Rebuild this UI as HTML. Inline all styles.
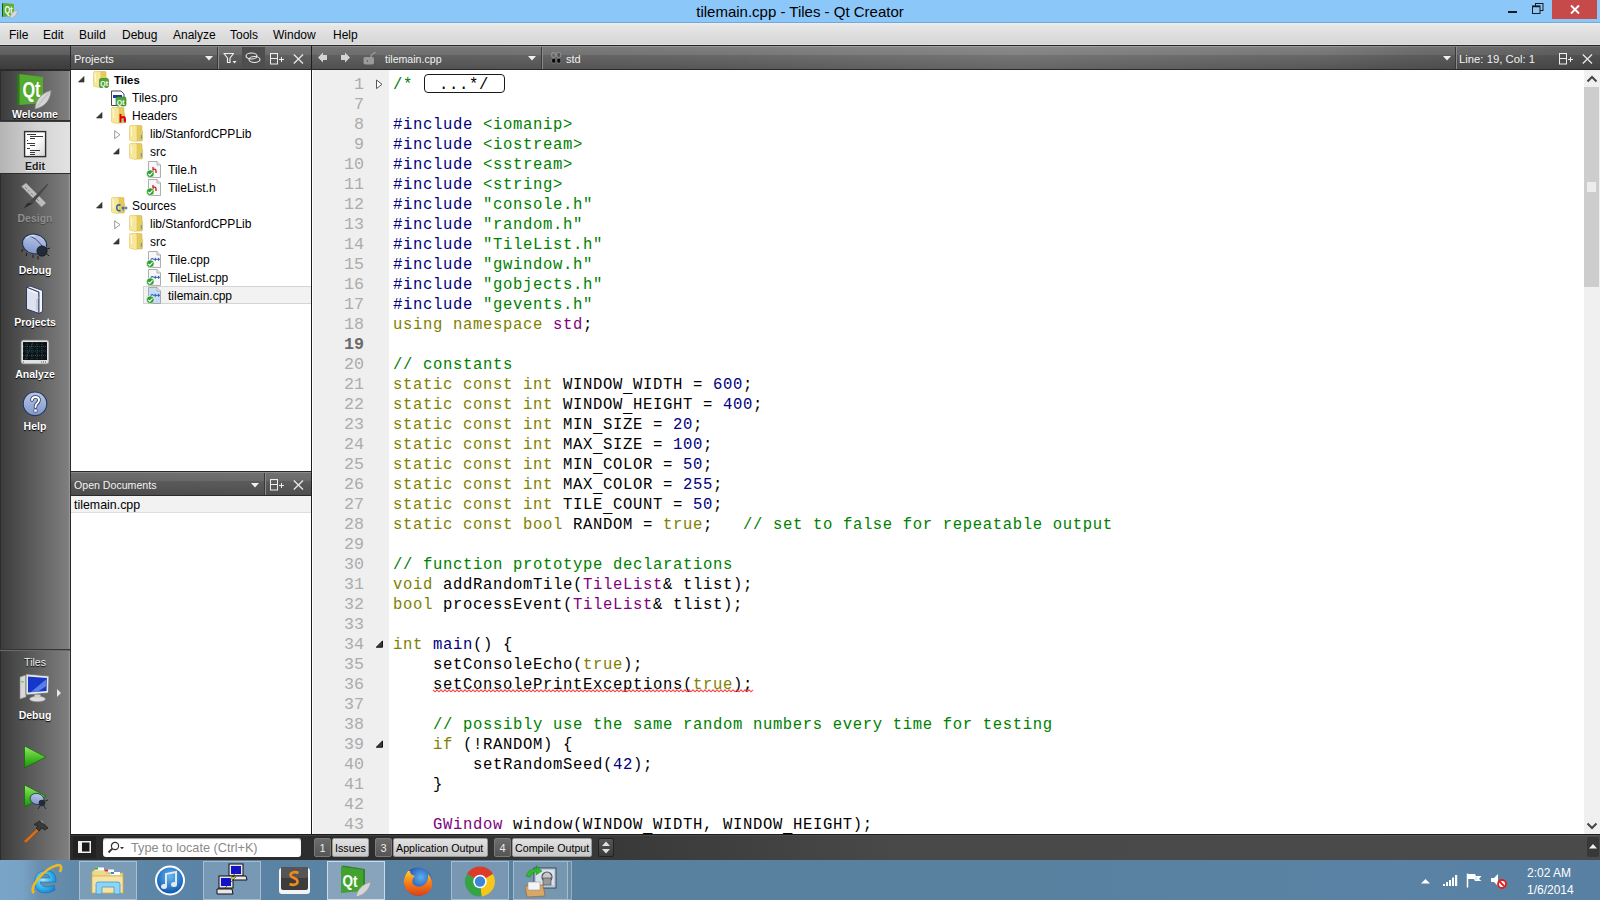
<!DOCTYPE html>
<html><head><meta charset="utf-8">
<style>
*{margin:0;padding:0;box-sizing:border-box}
html,body{width:1600px;height:900px;overflow:hidden;background:#fff;font-family:"Liberation Sans",sans-serif}
.a{position:absolute}
svg{position:absolute;overflow:visible}
#title{left:0;top:0;width:1600px;height:23px;background:#8cc7f9;border-bottom:1px solid #70a9da}
#ttext{left:0;top:3px;width:1600px;text-align:center;font-size:15px;color:#000}
#menu{left:0;top:23px;width:1600px;height:22px;background:linear-gradient(#f0eeec 0,#e6e6e6 3px,#d6d6d6 21px,#e0e0e0 21px)}
.mi{top:28px;font-size:12px;color:#000}
#tbline{left:0;top:45px;width:1600px;height:1px;background:#262626}
.hdr{height:24px;background:linear-gradient(#9a9a9a 0,#9a9a9a 1px,#7e7e7e 1px,#767676 9px,#686868 9px,#575757 23px);border-bottom:1px solid #2a2a2a}
.htxt{font-size:11px;color:#f2f2f2;white-space:nowrap}
#side{left:0;top:46px;width:70px;height:814px;background:linear-gradient(90deg,#3c3c3c,#575757 40%,#7e7e7e 97%,#909090)}
.mlab{position:absolute;left:0;width:70px;text-align:center;font-size:10.5px;font-weight:bold;color:#fff;text-shadow:0 1px 1px #000}
#tree{left:71px;top:70px;width:240px;height:401px;background:#fff}
.tr{position:absolute;font-size:12px;color:#000;white-space:nowrap}
#odhdr{left:71px;top:471px;width:240px;height:25px;border-top:1px solid #2a2a2a}
#od{left:71px;top:496px;width:240px;height:338px;background:#fff}
#vdiv{left:311px;top:46px;width:1px;height:789px;background:#1e1e1e}
#gutter{left:313px;top:70px;width:76px;height:764px;background:#efefef}
#code{left:389px;top:70px;width:1196px;height:764px;background:#fff}
.ln{position:absolute;left:312px;width:52px;text-align:right;font-family:"Liberation Mono",monospace;font-size:16.67px;color:#acacac;line-height:20px}
.cl{position:absolute;left:393px;font-family:"Liberation Mono",monospace;font-size:15.6px;letter-spacing:0.6386px;line-height:20px;white-space:pre;color:#000}
.k{color:#808000}.p{color:#000080}.s{color:#008000}.c{color:#008000}.n{color:#000080}.t{color:#800080}.f{color:#000080}
.sq{}
#vscroll{left:1584px;top:70px;width:16px;height:764px;background:#f0f0f0}
#bottom{left:71px;top:834px;width:1529px;height:26px;background:linear-gradient(90deg,#2b2b2b 0,#2d2d2d 300px,#3a3a3a 560px,#494949 830px,#4a4a4a 100%);border-top:1px solid #1c1c1c}
#taskbar{left:0;top:860px;width:1600px;height:40px;background:linear-gradient(90deg,#7aa5c8 0,#78a2c4 22px,#6a8fae 40px,#6088a8 80px,#5b83a5 200px,#58809f 600px,#58809f 1000px,#5a82a4 1400px,#5880a2 1600px)}
.tb{position:absolute;top:861px;height:39px;width:58px;border:1px solid rgba(255,255,255,.35);background:rgba(255,255,255,.18)}
.obx{position:absolute;top:838px;height:19px;font-size:11px;white-space:nowrap}
.obn{position:absolute;top:838px;height:19px;width:17px;background:linear-gradient(#6c6c6c,#555);border:1px solid #7a7a7a;color:#eaeaea;font-size:11px;text-align:center;line-height:18px;border-radius:2px}
.obl{position:absolute;white-space:nowrap;overflow:hidden;top:838px;height:19px;background:linear-gradient(#e2e2e2,#c8c8c8);border:1px solid #9a9a9a;color:#000;font-size:10.7px;line-height:18px;padding-left:2px;border-radius:2px}
.u{position:relative;top:3px}
</style></head><body>
<div class="a" id="title"></div>
<svg style="left:0;top:0" width="20" height="20" viewBox="0 0 20 20"><path d="M2 3.6 L3.2 3 L3.2 17 L2 16.6Z" fill="#115e12"/><path d="M3.2 3 L13.9 4.1 L13.9 15.6 L3.2 17Z" fill="#5aae2e"/><text x="4.6" y="13.8" font-family="Liberation Sans" font-weight="bold" font-size="11" fill="#fff" textLength="8.2" lengthAdjust="spacingAndGlyphs">Qt</text><path d="M10 18.6 C10.2 14.2 13 11.2 17.5 10 C17.2 14.2 14.6 17.6 10 18.6Z" fill="#dadada" stroke="#9a9a9a" stroke-width=".5"/></svg>
<div class="a" id="ttext">tilemain.cpp - Tiles - Qt Creator</div>
<div class="a" style="left:1508px;top:11px;width:9px;height:2px;background:#1a1a1a"></div>
<svg style="left:1532px;top:3px" width="12" height="11" viewBox="0 0 12 11"><rect x="3.5" y="0.5" width="7.5" height="7" fill="none" stroke="#1a1a1a"/><rect x="0.5" y="3" width="7.5" height="7.5" fill="#8cc7f9" stroke="#1a1a1a"/><line x1="0.5" y1="3.5" x2="8" y2="3.5" stroke="#1a1a1a" stroke-width="1.5"/></svg>
<div class="a" style="left:1552px;top:0;width:45px;height:19px;background:#c74a4a"></div>
<svg style="left:1570px;top:5px" width="10" height="9" viewBox="0 0 10 9"><path d="M1 0.5 L9 8.5 M9 0.5 L1 8.5" stroke="#fff" stroke-width="1.8"/></svg>
<div class="a" id="menu"></div>
<div class="a mi" style="left:9px">File</div>
<div class="a mi" style="left:43px">Edit</div>
<div class="a mi" style="left:79px">Build</div>
<div class="a mi" style="left:122px">Debug</div>
<div class="a mi" style="left:173px">Analyze</div>
<div class="a mi" style="left:230px">Tools</div>
<div class="a mi" style="left:273px">Window</div>
<div class="a mi" style="left:333px">Help</div>
<div class="a" id="tbline"></div>
<div class="a" id="side"></div><div class="a" style="left:0;top:70px;width:1px;height:790px;background:#2c2c2c"></div><div class="a" style="left:69px;top:70px;width:1px;height:790px;background:#959595"></div>
<div class="a hdr" style="left:0;top:46px;width:70px;background:linear-gradient(#747474 0,#747474 1px,#686868 1px,#5e5e5e 9px,#4c4c4c 9px,#3c3c3c 23px)"></div><div class="a" style="left:70px;top:46px;width:1px;height:814px;background:#2a2a2a"></div>
<div class="a hdr" style="left:71px;top:46px;width:240px"></div>
<div class="a hdr" style="left:312px;top:46px;width:1288px"></div>
<div class="a" style="left:71px;top:46px;width:1529px;height:23px;background:linear-gradient(90deg,rgba(0,0,0,.13) 0,rgba(0,0,0,.06) 394px,rgba(0,0,0,0) 644px,rgba(255,255,255,.09) 944px,rgba(0,0,0,0) 1244px,rgba(0,0,0,.1) 1339px,rgba(0,0,0,.22) 1499px,rgba(0,0,0,.24) 1529px)"></div>
<div class="a" style="left:0;top:70px;width:70px;height:1px;background:#2a2a2a"></div>
<div class="a htxt" style="left:74px;top:53px">Projects</div>
<svg style="left:205px;top:56px" width="9" height="5" viewBox="0 0 9 5"><path d="M0 0 L8 0 L4 4.5 Z" fill="#f0f0f0"/></svg>
<div class="a" style="left:217px;top:47px;width:1px;height:22px;background:#3a3a3a"></div>
<div class="a" style="left:218px;top:47px;width:1px;height:22px;background:#8a8a8a"></div>
<svg style="left:223px;top:52px" width="16" height="13" viewBox="0 0 16 13"><path d="M1 1.5 L10.5 1.5 L7 6 L7 10.5 L4.5 10.5 L4.5 6 Z" fill="none" stroke="#eee" stroke-width="1.2" stroke-linejoin="round"/><path d="M9.5 9 L13.5 9 L11.5 11.5Z" fill="#eee"/></svg>
<div class="a" style="left:242px;top:47px;width:23px;height:22px;background:#4e4e4e"></div>
<svg style="left:245px;top:52px" width="17" height="12" viewBox="0 0 17 12"><ellipse cx="6.5" cy="4" rx="5.5" ry="3" fill="none" stroke="#eee" stroke-width="1.1"/><ellipse cx="9.5" cy="7.5" rx="5.5" ry="3" fill="none" stroke="#eee" stroke-width="1.1"/></svg>
<svg style="left:270px;top:53px" width="15" height="12" viewBox="0 0 15 12"><rect x="0.5" y="0.5" width="7" height="10.5" fill="none" stroke="#eee"/><line x1="0.5" y1="5.5" x2="7.5" y2="5.5" stroke="#eee"/><path d="M9 6.5 H14 M11.5 4 V9" stroke="#eee" stroke-width="1"/></svg>
<svg style="left:293px;top:54px" width="11" height="10" viewBox="0 0 11 10"><path d="M0.8 0.5 L10 9.5 M10 0.5 L0.8 9.5" stroke="#e8e8e8" stroke-width="1.3"/></svg>
<svg style="left:318px;top:52px" width="10" height="11" viewBox="0 0 10 11"><path d="M0 5.5 L5 0.5 L5 3 L9 3 L9 8 L5 8 L5 10.5 Z" fill="#d4d4d4"/></svg>
<svg style="left:341px;top:52px" width="10" height="11" viewBox="0 0 10 11"><path d="M9 5.5 L4 0.5 L4 3 L0 3 L0 8 L4 8 L4 10.5 Z" fill="#d4d4d4"/></svg>
<svg style="left:363px;top:51px" width="14" height="14" viewBox="0 0 14 14"><rect x="0.5" y="6" width="10.5" height="7.5" rx="1.8" fill="#9a9a9a"/><path d="M8 6 L8 4.5 L12.5 1" stroke="#9a9a9a" stroke-width="1.3" fill="none"/><path d="M5 9 L4 10 L5 11" stroke="#555" stroke-width=".8" fill="none"/></svg>
<div class="a htxt" style="left:385px;top:53px;font-size:10.6px">tilemain.cpp</div>
<svg style="left:528px;top:56px" width="9" height="5" viewBox="0 0 9 5"><path d="M0 0 L8 0 L4 4.5 Z" fill="#f0f0f0"/></svg>
<div class="a" style="left:541px;top:47px;width:1px;height:22px;background:#3a3a3a"></div>
<div class="a" style="left:542px;top:47px;width:1px;height:22px;background:#8a8a8a"></div>
<svg style="left:551px;top:52px" width="11" height="12" viewBox="0 0 11 12"><rect x="0.7" y="0.7" width="4" height="4.6" rx="1.3" fill="none" stroke="#9a9a9a" stroke-width=".9"/><rect x="5.8" y="0.7" width="4" height="4.6" rx="1.3" fill="#555" stroke="#9a9a9a" stroke-width=".9"/><rect x="0.7" y="6.3" width="4" height="4.8" rx="1.5" fill="#0a0a0a" stroke="#8a8a8a" stroke-width=".7"/><rect x="5.8" y="6.3" width="4" height="4.8" rx="1.5" fill="#0a0a0a" stroke="#8a8a8a" stroke-width=".7"/></svg>
<div class="a htxt" style="left:566px;top:53px">std</div>
<svg style="left:1443px;top:56px" width="9" height="5" viewBox="0 0 9 5"><path d="M0 0 L8 0 L4 4.5 Z" fill="#f0f0f0"/></svg>
<div class="a" style="left:1455px;top:47px;width:1px;height:22px;background:#3a3a3a"></div>
<div class="a" style="left:1456px;top:47px;width:1px;height:22px;background:#8a8a8a"></div>
<div class="a htxt" style="left:1459px;top:53px;font-size:11.3px">Line: 19, Col: 1</div>
<svg style="left:1559px;top:53px" width="15" height="12" viewBox="0 0 15 12"><rect x="0.5" y="0.5" width="7" height="10.5" fill="none" stroke="#eee"/><line x1="0.5" y1="5.5" x2="7.5" y2="5.5" stroke="#eee"/><path d="M9 6.5 H14 M11.5 4 V9" stroke="#eee" stroke-width="1"/></svg>
<svg style="left:1582px;top:54px" width="11" height="10" viewBox="0 0 11 10"><path d="M0.8 0.5 L10 9.5 M10 0.5 L0.8 9.5" stroke="#e8e8e8" stroke-width="1.3"/></svg>
<div class="a" style="left:0;top:120px;width:70px;height:2px;background:linear-gradient(#2a2a2a,#444)"></div>
<div class="a" style="left:0;top:122px;width:70px;height:51px;background:linear-gradient(90deg,#b4b4b4,#d2d2d2 50%,#e2e2e2)"></div>
<div class="a" style="left:0;top:173px;width:70px;height:1px;background:#2e2e2e"></div>
<svg style="left:0;top:0" width="70" height="860" viewBox="0 0 70 860">
<defs>
<linearGradient id="eg" x1="0" x2="1" y1="0" y2="1"><stop offset="0" stop-color="#fff"/><stop offset=".45" stop-color="#fff"/><stop offset="1" stop-color="#d4d4d4"/></linearGradient>
<linearGradient id="bugg" x1="0" x2="0" y1="0" y2="1"><stop offset="0" stop-color="#b9c8ea"/><stop offset="1" stop-color="#7f96c8"/></linearGradient>
<linearGradient id="pg" x1="0" x2="0" y1="0" y2="1"><stop offset="0" stop-color="#9be86a"/><stop offset=".5" stop-color="#4cc22a"/><stop offset="1" stop-color="#1e8c12"/></linearGradient>
</defs>
<path d="M17 75 L19.5 74 L19.5 105 L17 105.5Z" fill="#2a7a1c"/>
<path d="M19.5 74 L43 77 L43 103 L19.5 105Z" fill="#55aa30"/>
<text x="22.5" y="97" font-family="Liberation Sans" font-weight="bold" font-size="22" fill="#fff" textLength="18" lengthAdjust="spacingAndGlyphs">Qt</text>
<path d="M35 109 C35.5 99 42 93 51 90.5 C50.5 100 45 107 35 109Z" fill="#d4d4d4" stroke="#8a8a8a" stroke-width=".8"/>
<path d="M37 107 L49 92.5" stroke="#a8a8a8" stroke-width=".7"/>
<rect x="24.6" y="131.6" width="21" height="25" fill="url(#eg)" stroke="#2e2e2e" stroke-width="1.4"/>
<path d="M27 134.5 H36 M30 136.5 H43 M30 138.5 H35 M27 140.5 H28 M27 143.5 H35 M30 145.5 H35 M27 148.5 H30 M30 150.5 H40 M30 152.5 H35 M30 154.5 H35" stroke="#3a3a3a" stroke-width="1"/>
<path d="M21.5 186.5 L26 183 L46 203 L41.5 207Z" fill="#bdbdbd" stroke="#8a8a8a" stroke-width=".6"/>
<path d="M25 187 L27 189 M28 190 L29.5 191.5 M31 193 L33 195 M34 196 L35.5 197.5 M37 199 L39 201" stroke="#777" stroke-width=".8"/>
<path d="M47.5 183.5 L31 200 L27.5 203 L33 203.5 L48 185Z" fill="#4a4a4a"/>
<path d="M27.5 203 L23.5 208.5 L30 205 L33 203.5Z" fill="#2a2a2a"/>
<ellipse cx="34.5" cy="244" rx="12.2" ry="9.8" fill="url(#bugg)" stroke="#24324e" stroke-width="1.1" transform="rotate(12 34.5 244)"/>
<path d="M27 236 Q36 236 44 249" stroke="#24324e" stroke-width=".8" fill="none"/>
<path d="M26 238 Q30 235 35 236" stroke="#dfe7f7" stroke-width="1.2" fill="none"/>
<circle cx="42" cy="251" r="5.2" fill="#222b3a" stroke="#111" stroke-width=".6"/>
<path d="M23 249 L21.5 252 M27 253 L26 256 M33 255 L33 258 M38 256 L38 259.5 M46 253 L49 256 M47 249 L50 248" stroke="#1a1a1a" stroke-width="1"/>
<path d="M26.5 287 L39 292 L39 313.5 L26.5 309Z" fill="#dde3ee" stroke="#2a3a62" stroke-width="1"/>
<path d="M26.5 287 L30 286 L42.5 290.5 L42.5 311.5 L39 313.5 L39 292Z" fill="#f2f4f8" stroke="#2a3a62" stroke-width=".9"/>
<path d="M39 297 L37 300 L37 310" stroke="#aab" stroke-width=".8" fill="none"/>
<path d="M28.5 290 L37.5 293.5" stroke="#fff" stroke-width="1"/>
<rect x="21" y="340" width="28" height="24" rx="2.5" fill="#e2e2e2" stroke="#7a7a7a" stroke-width=".8"/>
<rect x="23" y="342" width="24" height="18" fill="#0f1316"/>
<path d="M23 346.5 H47 M23 351 H47 M23 355.5 H47 M27 342 V360 M32 342 V360 M37 342 V360 M42 342 V360" stroke="#2a8a9a" stroke-width=".5" stroke-dasharray="1 1"/>
<path d="M25 360 L33 342" stroke="#3a4a50" stroke-width=".6"/>
<path d="M23 362 H24 M41 362 H42 M43 362 H44 M45 362 H46" stroke="#444" stroke-width=".9"/>
<circle cx="35" cy="403.8" r="11.8" fill="url(#bugg)" stroke="#26365c" stroke-width="1.1"/>
<path d="M32 400 Q32 397 35.5 397 Q39 397 39 400 Q39 402 37 403.5 Q35.5 404.5 35.5 407" stroke="#26365c" stroke-width="3.6" fill="none" stroke-linecap="round"/>
<path d="M32 400 Q32 397 35.5 397 Q39 397 39 400 Q39 402 37 403.5 Q35.5 404.5 35.5 407" stroke="#fff" stroke-width="2" fill="none" stroke-linecap="round"/>
<rect x="33.8" y="409" width="3.4" height="3.2" rx=".6" fill="#fff" stroke="#26365c" stroke-width=".7"/>
<path d="M20 677 L26 675 L26 697 L20 699Z" fill="#d8d8d8" stroke="#888" stroke-width=".6"/>
<rect x="21.5" y="681" width="2" height="1.5" fill="#4c4"/>
<path d="M26 674 L49 676 L48.5 693 L26 695Z" fill="#e8e8e8" stroke="#6a6a6a" stroke-width=".8"/>
<path d="M28 676.5 L47 678 L46.5 691 L28 692.5Z" fill="#1638c8"/>
<path d="M31 692 L46.5 679 L46.5 686 L38 691.5Z" fill="#6f95f2" opacity=".75"/>
<ellipse cx="37.5" cy="699" rx="8" ry="2.8" fill="#dcdcdc" stroke="#8a8a8a" stroke-width=".6"/>
<rect x="34.5" y="694.5" width="6" height="3.5" fill="#cfcfcf"/>
<path d="M57 689 L61 693 L57 697Z" fill="#e8e8e8"/>
<path d="M24.5 746 L46 757 L24.5 768Z" fill="url(#pg)" stroke="#1b6a0e" stroke-width=".8"/>
<path d="M24.5 785 L46 796 L24.5 807Z" fill="url(#pg)" stroke="#1b6a0e" stroke-width=".8"/>
<ellipse cx="37" cy="799" rx="7" ry="5.5" fill="url(#bugg)" stroke="#24324e" stroke-width=".8" transform="rotate(15 37 799)"/>
<circle cx="42" cy="803" r="3.3" fill="#222b3a"/>
<path d="M40 806 L38 809 M44 806 L46 809 M45 801 L48 800" stroke="#1a1a1a" stroke-width=".8"/>
<path d="M23.5 841 L38 827 L40.5 829.5 L26 843.5Z" fill="#c8702a" stroke="#6a3810" stroke-width=".7"/>
<path d="M34 824.5 L40.5 820.5 L48 828 L45 830 L41.5 828 L39 831 L36 828 L38 826Z" fill="#3a3a3a" stroke="#111" stroke-width=".6"/>
<path d="M40.5 820.5 L43.5 823" stroke="#bbb" stroke-width=".9"/>
</svg>
<div class="mlab" style="top:108px">Welcome</div>
<div class="mlab" style="top:160px;color:#1a1a1a;text-shadow:0 1px 0 #f4f4f4">Edit</div>
<div class="mlab" style="top:212px;color:#8e8e8e;text-shadow:0 1px 1px #444">Design</div>
<div class="mlab" style="top:264px">Debug</div>
<div class="mlab" style="top:316px">Projects</div>
<div class="mlab" style="top:368px">Analyze</div>
<div class="mlab" style="top:420px">Help</div>
<div class="a" style="left:0;top:649px;width:70px;height:1px;background:#353535"></div>
<div class="a" style="left:0;top:650px;width:70px;height:1px;background:#6a6a6a"></div>
<div class="mlab" style="top:656px;font-weight:normal;font-size:10.5px;color:#f0f0f0">Tiles</div>
<div class="mlab" style="top:709px">Debug</div>
<div class="a" id="tree"></div>
<div class="a" style="left:143px;top:286px;width:168px;height:18px;background:#f2f2f2;border:1px solid #d4d4d4;border-right:none"></div>
<svg style="left:78px;top:76px" width="7" height="7" viewBox="0 0 7 7"><path d="M6 0.5 L6 6 L0.5 6Z" fill="#3a3a3a" stroke="#222" stroke-width=".6"/></svg>
<svg style="left:93px;top:71px" width="14" height="17" viewBox="0 0 14 17"><path d="M6 1.5 Q6 0.5 7 0.5 L12 0.5 Q13 0.5 13 1.5 L13 6 L13.6 6.5 L13.6 15 Q13.6 16 12.6 16 L7 16Z" fill="#e6ca5c" stroke="#cfae44" stroke-width=".5"/><path d="M0.5 1.5 Q0.5 0.5 1.5 0.5 L6.5 0.5 Q8 0.5 8 2 L8 15.5 Q8 16.5 6.5 16.5 L1.5 15.5 Q0.5 15.3 0.5 14.5Z" fill="#f6e898" stroke="#d8bc50" stroke-width=".5"/><path d="M2 2 L2.6 11" stroke="#fffbe6" stroke-width="1"/><path d="M12.3 10 L12.3 14" stroke="#3a9ad8" stroke-width="1"/></svg>
<svg style="left:99px;top:78px" width="10" height="10" viewBox="0 0 10 10"><rect x="0.5" y="0.5" width="9" height="9" rx="1.5" fill="#4ca636" stroke="#2e7a1e" stroke-width=".6"/><text x="1.2" y="7.8" font-family="Liberation Sans" font-weight="bold" font-size="7" fill="#fff">Qt</text></svg>
<div class="tr" style="left:114px;top:74px;font-weight:bold;font-size:11.4px;">Tiles</div>
<svg style="left:111px;top:90px" width="16" height="17" viewBox="0 0 16 17"><path d="M0.5 1 L10 1 L13 4 L13 15.5 L0.5 15.5Z" fill="#fff" stroke="#333" stroke-width=".9"/><rect x="2" y="5" width="9" height="3" fill="#1e3ca8"/><rect x="5" y="7" width="10" height="9" rx="1.5" fill="#4ca636" stroke="#2e7a1e" stroke-width=".6"/><text x="5.8" y="14.5" font-family="Liberation Sans" font-weight="bold" font-size="7" fill="#fff">Qt</text></svg>
<div class="tr" style="left:132px;top:91px;">Tiles.pro</div>
<svg style="left:96px;top:112px" width="7" height="7" viewBox="0 0 7 7"><path d="M6 0.5 L6 6 L0.5 6Z" fill="#3a3a3a" stroke="#222" stroke-width=".6"/></svg>
<svg style="left:111px;top:107px" width="14" height="17" viewBox="0 0 14 17"><path d="M6 1.5 Q6 0.5 7 0.5 L12 0.5 Q13 0.5 13 1.5 L13 6 L13.6 6.5 L13.6 15 Q13.6 16 12.6 16 L7 16Z" fill="#e6ca5c" stroke="#cfae44" stroke-width=".5"/><path d="M0.5 1.5 Q0.5 0.5 1.5 0.5 L6.5 0.5 Q8 0.5 8 2 L8 15.5 Q8 16.5 6.5 16.5 L1.5 15.5 Q0.5 15.3 0.5 14.5Z" fill="#f6e898" stroke="#d8bc50" stroke-width=".5"/><path d="M2 2 L2.6 11" stroke="#fffbe6" stroke-width="1"/><path d="M12.3 10 L12.3 14" stroke="#3a9ad8" stroke-width="1"/></svg>
<svg style="left:119px;top:114px" width="8" height="9" viewBox="0 0 8 9"><path d="M1.5 0 V8.5 M1.5 4.5 Q2.5 3 4.5 3 Q6 3 6 5 V8.5" stroke="#e00000" stroke-width="1.9" fill="none"/></svg>
<div class="tr" style="left:132px;top:109px;">Headers</div>
<svg style="left:114px;top:130px" width="7" height="10" viewBox="0 0 7 10"><path d="M0.7 0.7 L6 4.7 L0.7 8.7Z" fill="#fff" stroke="#999" stroke-width="1"/></svg>
<svg style="left:129px;top:125px" width="14" height="17" viewBox="0 0 14 17"><path d="M6 1.5 Q6 0.5 7 0.5 L12 0.5 Q13 0.5 13 1.5 L13 6 L13.6 6.5 L13.6 15 Q13.6 16 12.6 16 L7 16Z" fill="#e6ca5c" stroke="#cfae44" stroke-width=".5"/><path d="M0.5 1.5 Q0.5 0.5 1.5 0.5 L6.5 0.5 Q8 0.5 8 2 L8 15.5 Q8 16.5 6.5 16.5 L1.5 15.5 Q0.5 15.3 0.5 14.5Z" fill="#f6e898" stroke="#d8bc50" stroke-width=".5"/><path d="M2 2 L2.6 11" stroke="#fffbe6" stroke-width="1"/><path d="M12.3 10 L12.3 14" stroke="#3a9ad8" stroke-width="1"/></svg>
<div class="tr" style="left:150px;top:127px;">lib/StanfordCPPLib</div>
<svg style="left:113px;top:148px" width="7" height="7" viewBox="0 0 7 7"><path d="M6 0.5 L6 6 L0.5 6Z" fill="#3a3a3a" stroke="#222" stroke-width=".6"/></svg>
<svg style="left:129px;top:143px" width="14" height="17" viewBox="0 0 14 17"><path d="M6 1.5 Q6 0.5 7 0.5 L12 0.5 Q13 0.5 13 1.5 L13 6 L13.6 6.5 L13.6 15 Q13.6 16 12.6 16 L7 16Z" fill="#e6ca5c" stroke="#cfae44" stroke-width=".5"/><path d="M0.5 1.5 Q0.5 0.5 1.5 0.5 L6.5 0.5 Q8 0.5 8 2 L8 15.5 Q8 16.5 6.5 16.5 L1.5 15.5 Q0.5 15.3 0.5 14.5Z" fill="#f6e898" stroke="#d8bc50" stroke-width=".5"/><path d="M2 2 L2.6 11" stroke="#fffbe6" stroke-width="1"/><path d="M12.3 10 L12.3 14" stroke="#3a9ad8" stroke-width="1"/></svg>
<div class="tr" style="left:150px;top:145px;">src</div>
<svg style="left:146px;top:161px" width="16" height="17" viewBox="0 0 16 17"><path d="M2.5 0.5 L11 0.5 L14.5 4 L14.5 16.5 L2.5 16.5Z" fill="#f8f6f6" stroke="#9a9a9a" stroke-width=".8"/><path d="M11 0.5 L11 4 L14.5 4" fill="#e8e8e8" stroke="#9a9a9a" stroke-width=".7"/><path d="M7 6 L7 12 M7 8.5 Q10 7.5 10 10 L10 12" stroke="#c42020" stroke-width="1.3" fill="none"/><circle cx="4.3" cy="12.7" r="3.8" fill="#2aa02a" stroke="#fff" stroke-width=".6"/><path d="M2.3 12.8 L3.8 14.3 L6.5 11.3" stroke="#fff" stroke-width="1.2" fill="none"/></svg>
<div class="tr" style="left:168px;top:163px;">Tile.h</div>
<svg style="left:146px;top:179px" width="16" height="17" viewBox="0 0 16 17"><path d="M2.5 0.5 L11 0.5 L14.5 4 L14.5 16.5 L2.5 16.5Z" fill="#f8f6f6" stroke="#9a9a9a" stroke-width=".8"/><path d="M11 0.5 L11 4 L14.5 4" fill="#e8e8e8" stroke="#9a9a9a" stroke-width=".7"/><path d="M7 6 L7 12 M7 8.5 Q10 7.5 10 10 L10 12" stroke="#c42020" stroke-width="1.3" fill="none"/><circle cx="4.3" cy="12.7" r="3.8" fill="#2aa02a" stroke="#fff" stroke-width=".6"/><path d="M2.3 12.8 L3.8 14.3 L6.5 11.3" stroke="#fff" stroke-width="1.2" fill="none"/></svg>
<div class="tr" style="left:168px;top:181px;">TileList.h</div>
<svg style="left:96px;top:202px" width="7" height="7" viewBox="0 0 7 7"><path d="M6 0.5 L6 6 L0.5 6Z" fill="#3a3a3a" stroke="#222" stroke-width=".6"/></svg>
<svg style="left:111px;top:197px" width="14" height="17" viewBox="0 0 14 17"><path d="M6 1.5 Q6 0.5 7 0.5 L12 0.5 Q13 0.5 13 1.5 L13 6 L13.6 6.5 L13.6 15 Q13.6 16 12.6 16 L7 16Z" fill="#e6ca5c" stroke="#cfae44" stroke-width=".5"/><path d="M0.5 1.5 Q0.5 0.5 1.5 0.5 L6.5 0.5 Q8 0.5 8 2 L8 15.5 Q8 16.5 6.5 16.5 L1.5 15.5 Q0.5 15.3 0.5 14.5Z" fill="#f6e898" stroke="#d8bc50" stroke-width=".5"/><path d="M2 2 L2.6 11" stroke="#fffbe6" stroke-width="1"/><path d="M12.3 10 L12.3 14" stroke="#3a9ad8" stroke-width="1"/></svg>
<svg style="left:116px;top:204px" width="12" height="8" viewBox="0 0 12 8"><path d="M4.5 1.3 Q3.8 0.8 3 0.8 Q0.8 0.8 0.8 3.8 Q0.8 6.8 3 6.8 Q3.8 6.8 4.5 6.3" stroke="#2d64a0" stroke-width="1.5" fill="none"/><path d="M5.5 4 H8.5 M7 2.5 V5.5 M8.5 4 H11.5 M10 2.5 V5.5" stroke="#2d64a0" stroke-width="1.1"/></svg>
<div class="tr" style="left:132px;top:199px;">Sources</div>
<svg style="left:114px;top:220px" width="7" height="10" viewBox="0 0 7 10"><path d="M0.7 0.7 L6 4.7 L0.7 8.7Z" fill="#fff" stroke="#999" stroke-width="1"/></svg>
<svg style="left:129px;top:215px" width="14" height="17" viewBox="0 0 14 17"><path d="M6 1.5 Q6 0.5 7 0.5 L12 0.5 Q13 0.5 13 1.5 L13 6 L13.6 6.5 L13.6 15 Q13.6 16 12.6 16 L7 16Z" fill="#e6ca5c" stroke="#cfae44" stroke-width=".5"/><path d="M0.5 1.5 Q0.5 0.5 1.5 0.5 L6.5 0.5 Q8 0.5 8 2 L8 15.5 Q8 16.5 6.5 16.5 L1.5 15.5 Q0.5 15.3 0.5 14.5Z" fill="#f6e898" stroke="#d8bc50" stroke-width=".5"/><path d="M2 2 L2.6 11" stroke="#fffbe6" stroke-width="1"/><path d="M12.3 10 L12.3 14" stroke="#3a9ad8" stroke-width="1"/></svg>
<div class="tr" style="left:150px;top:217px;">lib/StanfordCPPLib</div>
<svg style="left:113px;top:238px" width="7" height="7" viewBox="0 0 7 7"><path d="M6 0.5 L6 6 L0.5 6Z" fill="#3a3a3a" stroke="#222" stroke-width=".6"/></svg>
<svg style="left:129px;top:233px" width="14" height="17" viewBox="0 0 14 17"><path d="M6 1.5 Q6 0.5 7 0.5 L12 0.5 Q13 0.5 13 1.5 L13 6 L13.6 6.5 L13.6 15 Q13.6 16 12.6 16 L7 16Z" fill="#e6ca5c" stroke="#cfae44" stroke-width=".5"/><path d="M0.5 1.5 Q0.5 0.5 1.5 0.5 L6.5 0.5 Q8 0.5 8 2 L8 15.5 Q8 16.5 6.5 16.5 L1.5 15.5 Q0.5 15.3 0.5 14.5Z" fill="#f6e898" stroke="#d8bc50" stroke-width=".5"/><path d="M2 2 L2.6 11" stroke="#fffbe6" stroke-width="1"/><path d="M12.3 10 L12.3 14" stroke="#3a9ad8" stroke-width="1"/></svg>
<div class="tr" style="left:150px;top:235px;">src</div>
<svg style="left:146px;top:251px" width="16" height="17" viewBox="0 0 16 17"><path d="M2.5 0.5 L11 0.5 L14.5 4 L14.5 16.5 L2.5 16.5Z" fill="#f8f6f6" stroke="#9a9a9a" stroke-width=".8"/><path d="M11 0.5 L11 4 L14.5 4" fill="#e8e8e8" stroke="#9a9a9a" stroke-width=".7"/><path d="M4.5 9.5 Q6 6 7.5 8.5" stroke="#2d5fb0" stroke-width="1.1" fill="none"/><path d="M7.5 8.3 H11 M9.3 6.8 V9.8 M11 8.3 H14 M12.6 6.8 V9.8" stroke="#2d5fb0" stroke-width="1"/><circle cx="4.3" cy="12.7" r="3.8" fill="#2aa02a" stroke="#fff" stroke-width=".6"/><path d="M2.3 12.8 L3.8 14.3 L6.5 11.3" stroke="#fff" stroke-width="1.2" fill="none"/></svg>
<div class="tr" style="left:168px;top:253px;">Tile.cpp</div>
<svg style="left:146px;top:269px" width="16" height="17" viewBox="0 0 16 17"><path d="M2.5 0.5 L11 0.5 L14.5 4 L14.5 16.5 L2.5 16.5Z" fill="#f8f6f6" stroke="#9a9a9a" stroke-width=".8"/><path d="M11 0.5 L11 4 L14.5 4" fill="#e8e8e8" stroke="#9a9a9a" stroke-width=".7"/><path d="M4.5 9.5 Q6 6 7.5 8.5" stroke="#2d5fb0" stroke-width="1.1" fill="none"/><path d="M7.5 8.3 H11 M9.3 6.8 V9.8 M11 8.3 H14 M12.6 6.8 V9.8" stroke="#2d5fb0" stroke-width="1"/><circle cx="4.3" cy="12.7" r="3.8" fill="#2aa02a" stroke="#fff" stroke-width=".6"/><path d="M2.3 12.8 L3.8 14.3 L6.5 11.3" stroke="#fff" stroke-width="1.2" fill="none"/></svg>
<div class="tr" style="left:168px;top:271px;">TileList.cpp</div>
<svg style="left:146px;top:287px" width="16" height="17" viewBox="0 0 16 17"><path d="M2.5 0.5 L11 0.5 L14.5 4 L14.5 16.5 L2.5 16.5Z" fill="#c6dbf5" stroke="#9a9a9a" stroke-width=".8"/><path d="M11 0.5 L11 4 L14.5 4" fill="#e8e8e8" stroke="#9a9a9a" stroke-width=".7"/><path d="M4.5 9.5 Q6 6 7.5 8.5" stroke="#2d5fb0" stroke-width="1.1" fill="none"/><path d="M7.5 8.3 H11 M9.3 6.8 V9.8 M11 8.3 H14 M12.6 6.8 V9.8" stroke="#2d5fb0" stroke-width="1"/><circle cx="4.3" cy="12.7" r="3.8" fill="#2aa02a" stroke="#fff" stroke-width=".6"/><path d="M2.3 12.8 L3.8 14.3 L6.5 11.3" stroke="#fff" stroke-width="1.2" fill="none"/></svg>
<div class="tr" style="left:168px;top:289px;">tilemain.cpp</div><div class="a hdr" id="odhdr"></div>
<div class="a" style="left:71px;top:472px;width:240px;height:23px;background:linear-gradient(90deg,rgba(0,0,0,.14),rgba(0,0,0,.1))"></div>
<div class="a htxt" style="left:74px;top:479px;font-size:10.6px">Open Documents</div>
<svg style="left:251px;top:483px" width="9" height="5" viewBox="0 0 9 5"><path d="M0 0 L8 0 L4 4.5 Z" fill="#f0f0f0"/></svg>
<div class="a" style="left:264px;top:473px;width:1px;height:22px;background:#3a3a3a"></div>
<div class="a" style="left:265px;top:473px;width:1px;height:22px;background:#8a8a8a"></div>
<svg style="left:270px;top:479px" width="15" height="12" viewBox="0 0 15 12"><rect x="0.5" y="0.5" width="7" height="10.5" fill="none" stroke="#eee"/><line x1="0.5" y1="5.5" x2="7.5" y2="5.5" stroke="#eee"/><path d="M9 6.5 H14 M11.5 4 V9" stroke="#eee" stroke-width="1"/></svg>
<svg style="left:293px;top:480px" width="11" height="10" viewBox="0 0 11 10"><path d="M0.8 0.5 L10 9.5 M10 0.5 L0.8 9.5" stroke="#e8e8e8" stroke-width="1.3"/></svg>
<div class="a" id="od"></div>
<div class="a" style="left:71px;top:496px;width:240px;height:17px;background:#f2f2f2;border-bottom:1px solid #dedede"></div>
<div class="tr" style="left:74px;top:498px;font-size:12.4px">tilemain.cpp</div>
<div class="a" id="bottom"></div><div class="a" style="left:71px;top:835px;width:1529px;height:1px;background:linear-gradient(90deg,#3a3a3a,#4a4a4a 560px,#5a5a5a)"></div>
<div class="a" style="left:73px;top:836px;width:23px;height:22px;background:#222"></div>
<svg style="left:78px;top:841px" width="14" height="13" viewBox="0 0 14 13"><rect x="0" y="0" width="13" height="12" fill="#f0f0f0"/><rect x="4" y="1.5" width="7.5" height="9" fill="#1a1a1a"/></svg>
<div class="a" style="left:103px;top:838px;width:198px;height:19px;background:#fff;border-radius:3px;box-shadow:inset 0 1px 1px #999"></div>
<svg style="left:107px;top:841px" width="20" height="13" viewBox="0 0 20 13"><circle cx="8" cy="5" r="3.6" fill="none" stroke="#333" stroke-width="1.2"/><path d="M5.3 7.7 L1.5 11.5" stroke="#333" stroke-width="1.8"/><path d="M13 6 L17 6 L15 8.3Z" fill="#333"/></svg>
<div class="a" style="left:131px;top:841px;font-size:12.7px;color:#8a8a8a;white-space:nowrap">Type to locate (Ctrl+K)</div>
<div class="obn" style="left:314px">1</div><div class="obl" style="left:332px;width:37px">Issues</div>
<div class="obn" style="left:375px">3</div><div class="obl" style="left:393px;width:95px">Application Output</div>
<div class="obn" style="left:494px">4</div><div class="obl" style="left:512px;width:80px">Compile Output</div>
<div class="a" style="left:598px;top:838px;width:16px;height:19px;background:linear-gradient(#555,#3c3c3c);border:1px solid #222;border-radius:2px"></div>
<svg style="left:601px;top:841px" width="10" height="13" viewBox="0 0 10 13"><path d="M1 5 L5 0.5 L9 5Z M1 8 L5 12.5 L9 8Z" fill="#e0e0e0"/></svg>
<div class="a" style="left:1587px;top:837px;width:12px;height:20px;background:#383838;border-radius:2px"></div>
<svg style="left:1588px;top:843px" width="10" height="6" viewBox="0 0 10 6"><path d="M1 5.5 L5 1 L9 5.5Z" fill="#f0f0f0"/></svg>
<div class="a" id="vdiv"></div><div class="a" id="gutter"></div><div class="a" id="code"></div>
<div class="ln" style="top:75px">1</div>
<div class="cl" style="top:75px"><span class="c">/* </span></div>
<div class="ln" style="top:95px">7</div>
<div class="ln" style="top:115px">8</div>
<div class="cl" style="top:115px"><span class="p">#include</span> <span class="s">&lt;iomanip&gt;</span></div>
<div class="ln" style="top:135px">9</div>
<div class="cl" style="top:135px"><span class="p">#include</span> <span class="s">&lt;iostream&gt;</span></div>
<div class="ln" style="top:155px">10</div>
<div class="cl" style="top:155px"><span class="p">#include</span> <span class="s">&lt;sstream&gt;</span></div>
<div class="ln" style="top:175px">11</div>
<div class="cl" style="top:175px"><span class="p">#include</span> <span class="s">&lt;string&gt;</span></div>
<div class="ln" style="top:195px">12</div>
<div class="cl" style="top:195px"><span class="p">#include</span> <span class="s">"console.h"</span></div>
<div class="ln" style="top:215px">13</div>
<div class="cl" style="top:215px"><span class="p">#include</span> <span class="s">"random.h"</span></div>
<div class="ln" style="top:235px">14</div>
<div class="cl" style="top:235px"><span class="p">#include</span> <span class="s">"TileList.h"</span></div>
<div class="ln" style="top:255px">15</div>
<div class="cl" style="top:255px"><span class="p">#include</span> <span class="s">"gwindow.h"</span></div>
<div class="ln" style="top:275px">16</div>
<div class="cl" style="top:275px"><span class="p">#include</span> <span class="s">"gobjects.h"</span></div>
<div class="ln" style="top:295px">17</div>
<div class="cl" style="top:295px"><span class="p">#include</span> <span class="s">"gevents.h"</span></div>
<div class="ln" style="top:315px">18</div>
<div class="cl" style="top:315px"><span class="k">using namespace</span> <span class="t">std</span>;</div>
<div class="ln" style="top:335px;font-weight:bold;color:#6a6a6a">19</div>
<div class="ln" style="top:355px">20</div>
<div class="cl" style="top:355px"><span class="c">// constants</span></div>
<div class="ln" style="top:375px">21</div>
<div class="cl" style="top:375px"><span class="k">static const int</span> WINDOW<span class="u">_</span>WIDTH = <span class="n">600</span>;</div>
<div class="ln" style="top:395px">22</div>
<div class="cl" style="top:395px"><span class="k">static const int</span> WINDOW<span class="u">_</span>HEIGHT = <span class="n">400</span>;</div>
<div class="ln" style="top:415px">23</div>
<div class="cl" style="top:415px"><span class="k">static const int</span> MIN<span class="u">_</span>SIZE = <span class="n">20</span>;</div>
<div class="ln" style="top:435px">24</div>
<div class="cl" style="top:435px"><span class="k">static const int</span> MAX<span class="u">_</span>SIZE = <span class="n">100</span>;</div>
<div class="ln" style="top:455px">25</div>
<div class="cl" style="top:455px"><span class="k">static const int</span> MIN<span class="u">_</span>COLOR = <span class="n">50</span>;</div>
<div class="ln" style="top:475px">26</div>
<div class="cl" style="top:475px"><span class="k">static const int</span> MAX<span class="u">_</span>COLOR = <span class="n">255</span>;</div>
<div class="ln" style="top:495px">27</div>
<div class="cl" style="top:495px"><span class="k">static const int</span> TILE<span class="u">_</span>COUNT = <span class="n">50</span>;</div>
<div class="ln" style="top:515px">28</div>
<div class="cl" style="top:515px"><span class="k">static const bool</span> RANDOM = <span class="k">true</span>;   <span class="c">// set to false for repeatable output</span></div>
<div class="ln" style="top:535px">29</div>
<div class="ln" style="top:555px">30</div>
<div class="cl" style="top:555px"><span class="c">// function prototype declarations</span></div>
<div class="ln" style="top:575px">31</div>
<div class="cl" style="top:575px"><span class="k">void</span> addRandomTile(<span class="t">TileList</span>&amp; tlist);</div>
<div class="ln" style="top:595px">32</div>
<div class="cl" style="top:595px"><span class="k">bool</span> processEvent(<span class="t">TileList</span>&amp; tlist);</div>
<div class="ln" style="top:615px">33</div>
<div class="ln" style="top:635px">34</div>
<div class="cl" style="top:635px"><span class="k">int</span> <span class="f">main</span>() {</div>
<div class="ln" style="top:655px">35</div>
<div class="cl" style="top:655px">    setConsoleEcho(<span class="k">true</span>);</div>
<div class="ln" style="top:675px">36</div>
<div class="cl" style="top:675px">    <span class="sq">setConsolePrintExceptions(<span class="k">true</span>);</span></div>
<div class="ln" style="top:695px">37</div>
<div class="ln" style="top:715px">38</div>
<div class="cl" style="top:715px">    <span class="c">// possibly use the same random numbers every time for testing</span></div>
<div class="ln" style="top:735px">39</div>
<div class="cl" style="top:735px">    <span class="k">if</span> (!RANDOM) {</div>
<div class="ln" style="top:755px">40</div>
<div class="cl" style="top:755px">        setRandomSeed(<span class="n">42</span>);</div>
<div class="ln" style="top:775px">41</div>
<div class="cl" style="top:775px">    }</div>
<div class="ln" style="top:795px">42</div>
<div class="ln" style="top:815px">43</div>
<div class="cl" style="top:815px">    <span class="t">GWindow</span> window(WINDOW<span class="u">_</span>WIDTH, WINDOW<span class="u">_</span>HEIGHT);</div><div class="a" style="left:424px;top:74px;width:81px;height:19px;border:1px solid #1a1a1a;border-radius:4px"></div>
<div class="cl" style="left:439px;top:75px">...*/</div>
<svg style="left:375px;top:79px" width="9" height="11" viewBox="0 0 9 11"><path d="M1.5 1 L7 5.3 L1.5 9.6Z" fill="#fff" stroke="#555" stroke-width="1"/></svg>
<svg style="left:375px;top:640px" width="9" height="9" viewBox="0 0 9 9"><path d="M7.5 1 L7.5 7.2 L1.3 7.2Z" fill="#3a3a3a" stroke="#111" stroke-width="1" stroke-linejoin="round"/></svg>
<svg style="left:375px;top:740px" width="9" height="9" viewBox="0 0 9 9"><path d="M7.5 1 L7.5 7.2 L1.3 7.2Z" fill="#3a3a3a" stroke="#111" stroke-width="1" stroke-linejoin="round"/></svg>
<svg style="left:433px;top:689px" width="321" height="4" viewBox="0 0 321 4"><path d="M0.0 0.8 L2.0 2.8 L4.0 0.8 L6.0 2.8 L8.0 0.8 L10.0 2.8 L12.0 0.8 L14.0 2.8 L16.0 0.8 L18.0 2.8 L20.0 0.8 L22.0 2.8 L24.0 0.8 L26.0 2.8 L28.0 0.8 L30.0 2.8 L32.0 0.8 L34.0 2.8 L36.0 0.8 L38.0 2.8 L40.0 0.8 L42.0 2.8 L44.0 0.8 L46.0 2.8 L48.0 0.8 L50.0 2.8 L52.0 0.8 L54.0 2.8 L56.0 0.8 L58.0 2.8 L60.0 0.8 L62.0 2.8 L64.0 0.8 L66.0 2.8 L68.0 0.8 L70.0 2.8 L72.0 0.8 L74.0 2.8 L76.0 0.8 L78.0 2.8 L80.0 0.8 L82.0 2.8 L84.0 0.8 L86.0 2.8 L88.0 0.8 L90.0 2.8 L92.0 0.8 L94.0 2.8 L96.0 0.8 L98.0 2.8 L100.0 0.8 L102.0 2.8 L104.0 0.8 L106.0 2.8 L108.0 0.8 L110.0 2.8 L112.0 0.8 L114.0 2.8 L116.0 0.8 L118.0 2.8 L120.0 0.8 L122.0 2.8 L124.0 0.8 L126.0 2.8 L128.0 0.8 L130.0 2.8 L132.0 0.8 L134.0 2.8 L136.0 0.8 L138.0 2.8 L140.0 0.8 L142.0 2.8 L144.0 0.8 L146.0 2.8 L148.0 0.8 L150.0 2.8 L152.0 0.8 L154.0 2.8 L156.0 0.8 L158.0 2.8 L160.0 0.8 L162.0 2.8 L164.0 0.8 L166.0 2.8 L168.0 0.8 L170.0 2.8 L172.0 0.8 L174.0 2.8 L176.0 0.8 L178.0 2.8 L180.0 0.8 L182.0 2.8 L184.0 0.8 L186.0 2.8 L188.0 0.8 L190.0 2.8 L192.0 0.8 L194.0 2.8 L196.0 0.8 L198.0 2.8 L200.0 0.8 L202.0 2.8 L204.0 0.8 L206.0 2.8 L208.0 0.8 L210.0 2.8 L212.0 0.8 L214.0 2.8 L216.0 0.8 L218.0 2.8 L220.0 0.8 L222.0 2.8 L224.0 0.8 L226.0 2.8 L228.0 0.8 L230.0 2.8 L232.0 0.8 L234.0 2.8 L236.0 0.8 L238.0 2.8 L240.0 0.8 L242.0 2.8 L244.0 0.8 L246.0 2.8 L248.0 0.8 L250.0 2.8 L252.0 0.8 L254.0 2.8 L256.0 0.8 L258.0 2.8 L260.0 0.8 L262.0 2.8 L264.0 0.8 L266.0 2.8 L268.0 0.8 L270.0 2.8 L272.0 0.8 L274.0 2.8 L276.0 0.8 L278.0 2.8 L280.0 0.8 L282.0 2.8 L284.0 0.8 L286.0 2.8 L288.0 0.8 L290.0 2.8 L292.0 0.8 L294.0 2.8 L296.0 0.8 L298.0 2.8 L300.0 0.8 L302.0 2.8 L304.0 0.8 L306.0 2.8 L308.0 0.8 L310.0 2.8 L312.0 0.8 L314.0 2.8 L316.0 0.8 L318.0 2.8 L320.0 0.8" stroke="#ff2a2a" stroke-width="1.1" fill="none" opacity=".85"/></svg>
<div class="a" id="vscroll"></div>
<svg style="left:1586px;top:75px" width="12" height="8" viewBox="0 0 12 8"><path d="M1.5 6.5 L6 2 L10.5 6.5" stroke="#444" stroke-width="2" fill="none"/></svg>
<div class="a" style="left:1584px;top:87px;width:15px;height:200px;background:#cdcdcd"></div>
<div class="a" style="left:1587px;top:182px;width:9px;height:10px;background:#ececec"></div>
<svg style="left:1586px;top:822px" width="12" height="8" viewBox="0 0 12 8"><path d="M1.5 1.5 L6 6 L10.5 1.5" stroke="#444" stroke-width="2" fill="none"/></svg>
<div class="a" id="taskbar"></div>
<div class="tb" style="left:79px"></div>
<div class="tb" style="left:203px"></div>
<div class="tb" style="left:327px;border-color:rgba(255,255,255,.6);background:rgba(255,255,255,.28)"></div>
<div class="tb" style="left:451px"></div>
<div class="tb" style="left:513px;width:55px"></div>
<div class="a" style="left:568px;top:861px;width:4px;height:39px;border:1px solid rgba(255,255,255,.3);border-left:none;background:rgba(255,255,255,.1)"></div>
<svg style="left:30px;top:863px" width="32" height="33" viewBox="0 0 32 33"><defs><radialGradient id="ieg" cx=".4" cy=".4" r=".7"><stop offset="0" stop-color="#9fe8ff"/><stop offset=".6" stop-color="#2ab0ea"/><stop offset="1" stop-color="#1b78c8"/></radialGradient></defs><path d="M26 19 L10 19 Q11 24 17 24 Q21 24 24 22 L25 27 Q21 30 16 30 Q5 30 4.5 19.5 Q4.5 8 16 7.5 Q27 8 26 19Z M10 15 L20 15 Q19 11 15 11 Q11 11 10 15Z" fill="url(#ieg)" stroke="#1a6cb0" stroke-width=".6"/><path d="M4 30 Q0 26 8 16 Q18 4 28 2 Q33 2 30 9" stroke="#f2b81c" stroke-width="2.6" fill="none"/></svg>
<svg style="left:91px;top:866px" width="34" height="30" viewBox="0 0 34 30"><path d="M1 6 L1 27 L32 27 L32 7 L15 7 L13 4 L3 4Z" fill="#f0d88a" stroke="#c9a850" stroke-width=".7"/><rect x="4" y="1.5" width="9" height="3" fill="#fff"/><rect x="4" y="1.5" width="3" height="2" fill="#1fb81f"/><rect x="14" y="3.5" width="9" height="3" fill="#fff"/><rect x="14" y="3.5" width="3" height="2" fill="#d82020"/><rect x="20" y="6" width="9" height="3" fill="#fff"/><rect x="20" y="6" width="3" height="2" fill="#2a8ae0"/><path d="M1 10 L32 10 L32 27 L1 27Z" fill="#f6e4a4" stroke="#c9a850" stroke-width=".7"/><path d="M5 28 L5 18 Q5 16 7 16 L27 16 Q29 16 29 18 L29 28 L23 28 L23 21 L11 21 L11 28Z" fill="#8fd4f4" stroke="#3a9ad8" stroke-width=".8"/></svg>
<svg style="left:154px;top:865px" width="32" height="32" viewBox="0 0 32 32"><defs><radialGradient id="itg" cx=".5" cy=".35" r=".7"><stop offset="0" stop-color="#5fb8f8"/><stop offset="1" stop-color="#0a4ea8"/></radialGradient></defs><circle cx="16" cy="15.5" r="15" fill="#fff"/><circle cx="16" cy="15.5" r="13" fill="url(#itg)"/><path d="M12 21 L12 9 L22 7 L22 19" stroke="#e8e8e8" stroke-width="2" fill="none"/><ellipse cx="10" cy="21.5" rx="3" ry="2.5" fill="#e8e8e8"/><ellipse cx="20" cy="19.5" rx="3" ry="2.5" fill="#e8e8e8"/></svg>
<svg style="left:216px;top:863px" width="32" height="34" viewBox="0 0 32 34"><rect x="13" y="1" width="14" height="12" fill="#e8e8e8" stroke="#111" stroke-width="1"/><rect x="15" y="3" width="10" height="8" fill="#1010d0"/><path d="M17 13 L30 13 L31 17 L16 17Z" fill="#e8e8e8" stroke="#111" stroke-width="1"/><rect x="3" y="13" width="14" height="12" fill="#e8e8e8" stroke="#111" stroke-width="1"/><rect x="5" y="15" width="10" height="8" fill="#1010d0"/><path d="M1 26 L16 26 L17 31 L1 31Z" fill="#e8e8e8" stroke="#111" stroke-width="1"/><path d="M24 5 L14 16 L18 16 L8 26 L20 14 L16 14Z" fill="#f6f02a" stroke="#333" stroke-width=".5"/></svg>
<svg style="left:278px;top:866px" width="34" height="30" viewBox="0 0 34 30"><rect x="1" y="2" width="31" height="26" rx="3" fill="#f4f4f4"/><rect x="3" y="1" width="27" height="23" rx="2" fill="#3c3c3c"/><rect x="3" y="1" width="27" height="11" rx="2" fill="#555"/><path d="M20.5 7 Q16 5 13 7.5 Q11 10 16 12 Q21 14 19 17.5 Q16 20 11.5 18" stroke="#f08a1e" stroke-width="2.6" fill="none"/></svg>
<svg style="left:338px;top:865px" width="34" height="33" viewBox="0 0 34 33"><path d="M3 2 L25 5 L25 26 L3 28 Z" fill="#41a32d"/><path d="M3 2 L5 0.5 L27 4 L25 5Z" fill="#2f8420"/><path d="M25 5 L27 4 L27 27 L25 26Z" fill="#2f8a22"/><text x="5" y="20" font-family="Liberation Sans" font-weight="bold" font-size="15" fill="#fff" transform="scale(0.9,1.1)">Qt</text><path d="M18 32 C19 25 24 19 33 17 C31 25 26 30 18 32Z" fill="#d6d6d6" stroke="#9a9a9a" stroke-width=".7"/></svg>
<svg style="left:401px;top:865px" width="34" height="33" viewBox="0 0 34 33"><defs><radialGradient id="ffg" cx=".6" cy=".35" r=".6"><stop offset="0" stop-color="#5ab0f0"/><stop offset="1" stop-color="#1a3a9a"/></radialGradient><linearGradient id="ffo" x1="0" x2="0" y1="0" y2="1"><stop offset="0" stop-color="#ffcc30"/><stop offset=".5" stop-color="#f57a18"/><stop offset="1" stop-color="#d8401a"/></linearGradient></defs><circle cx="17" cy="16.5" r="14" fill="url(#ffg)"/><path d="M7 6 Q2 12 3 19 Q5 29 16 31 Q27 31 31 22 Q32 14 27 9 Q28 16 23 20 Q17 24 12 19 Q10 14 14 11 Q9 10 9 6Z" fill="url(#ffo)"/></svg>
<svg style="left:464px;top:866px" width="32" height="31" viewBox="0 0 32 31"><path d="M16 15.5 L3 8 A15 15 0 0 1 29 8Z" fill="#dc3b2c"/><path d="M16 15.5 L29 8 A15 15 0 0 1 17.5 30.4Z" fill="#f6c61c"/><path d="M16 15.5 L17.5 30.4 A15 15 0 0 1 3 8Z" fill="#35a446"/><circle cx="16" cy="15.5" r="6.8" fill="#fff"/><circle cx="16" cy="15.5" r="5.2" fill="#3b86d8"/></svg>
<svg style="left:523px;top:864px" width="36" height="34" viewBox="0 0 36 34"><rect x="11" y="4" width="22" height="20" fill="#b8c8e0" stroke="#333" stroke-width=".8"/><rect x="13" y="6" width="18" height="15" fill="#d8e4f0"/><circle cx="24" cy="13" r="5" fill="#c8c8c8" stroke="#555" stroke-width="1.2"/><rect x="20" y="14" width="8" height="7" fill="#999" stroke="#444" stroke-width=".6"/><path d="M2 22 L20 21 L22 32 L4 33Z" fill="#d8a868" stroke="#8a6030" stroke-width=".6"/><rect x="5" y="18" width="12" height="8" fill="#f4f4f4" stroke="#888" stroke-width=".5"/><path d="M3 12 Q6 4 14 5 L13 1.5 L19 7 L13 11 L13.5 8 Q9 8 7 13Z" fill="#2ac02a" stroke="#1a7a1a" stroke-width=".5"/></svg>
<svg style="left:1420px;top:877px" width="11" height="8" viewBox="0 0 11 8"><path d="M1 6.5 L5.5 2 L10 6.5Z" fill="#fff"/></svg>
<svg style="left:1442px;top:874px" width="17" height="13" viewBox="0 0 17 13"><rect x="1" y="10" width="2" height="2" fill="#fff"/><rect x="4" y="8" width="2" height="4" fill="#fff"/><rect x="7" y="6" width="2" height="6" fill="#fff"/><rect x="10" y="3.5" width="2" height="8.5" fill="#fff"/><rect x="13" y="1" width="2.2" height="11" fill="#fff"/></svg>
<svg style="left:1466px;top:873px" width="17" height="15" viewBox="0 0 17 15"><path d="M1.5 0.5 L1.5 14.5" stroke="#fff" stroke-width="1.5"/><path d="M2 1 L9 1 L10 3 L15.5 3 L13 6 L15.5 8 L9 8 L8 6 L2 6Z" fill="#fff"/><path d="M10 3.5 L10 7" stroke="#7aa" stroke-width=".5"/></svg>
<svg style="left:1490px;top:873px" width="18" height="16" viewBox="0 0 18 16"><path d="M1 5 L4 5 L8 1 L8 13 L4 9 L1 9Z" fill="#fff"/><circle cx="12" cy="11" r="4" fill="#fff" stroke="#e02020" stroke-width="1.8"/><path d="M9.5 8.5 L14.5 13.5" stroke="#e02020" stroke-width="1.8"/></svg>
<div class="a" style="left:1527px;top:866px;font-size:12px;color:#fff;white-space:nowrap">2:02 AM</div>
<div class="a" style="left:1527px;top:883px;font-size:12px;color:#fff;white-space:nowrap">1/6/2014</div>
</body></html>
